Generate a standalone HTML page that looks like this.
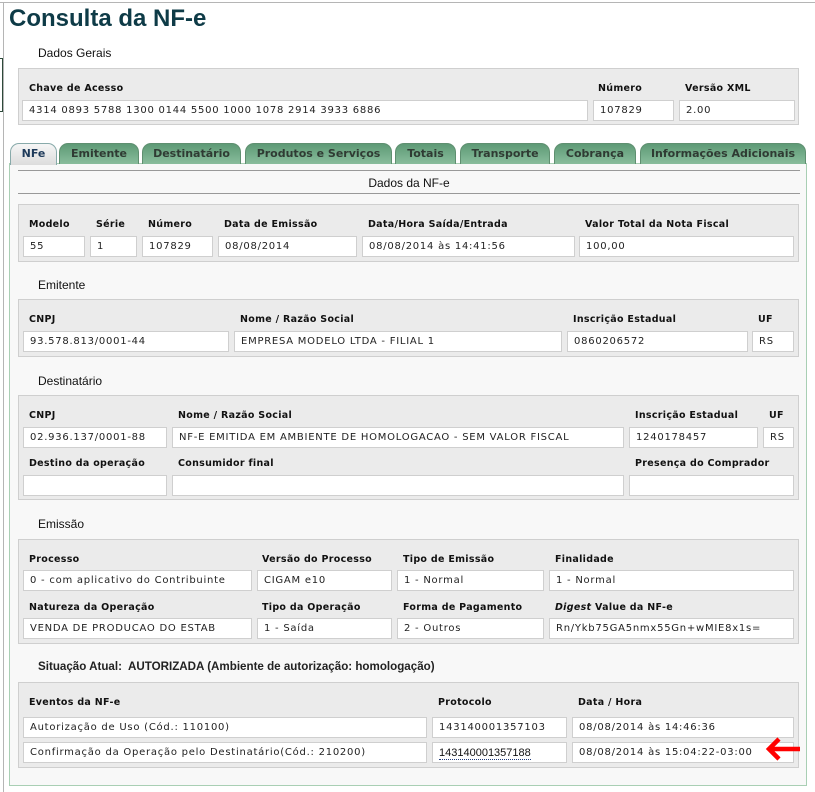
<!DOCTYPE html>
<html><head><meta charset="utf-8"><style>
*{margin:0;padding:0;box-sizing:border-box}
body{width:815px;height:792px;background:#fff;position:relative;overflow:hidden;font-family:"DejaVu Sans",Verdana,sans-serif}
div{position:absolute}
.b{background:#ebebeb;border:1px solid #cfcfcf}
.l{font-weight:bold;font-size:9.5px;color:#111;white-space:nowrap;letter-spacing:0.3px;margin-top:2px}
.i{background:#fff;border:1px solid #cfcfcf;height:21px;font-size:10px;color:#222;padding:4px 0 0 6px;white-space:nowrap;overflow:hidden;letter-spacing:0.75px}
.h{font-family:"Liberation Sans",Arial,sans-serif;font-size:12px;color:#111}
.t{top:143px;height:21px;border:1px solid #5f8f70;border-bottom:none;border-radius:9px 9px 0 0;background:linear-gradient(#5e9a76,#89bd9c);font-size:11px;color:#2f3b33;font-weight:bold;text-align:center;padding-top:3px;white-space:nowrap}
</style></head><body>
<div style="left:0;top:2px;width:815px;height:1px;background:#b5b5b5"></div>
<div style="left:3px;top:2px;width:1px;height:790px;background:#b5b5b5"></div>
<div style="left:0;top:58px;width:3px;height:54px;border:1px solid #2d4a3a;border-left:none"></div>
<div style="left:9px;top:5px;font-family:'Liberation Sans',Arial,sans-serif;font-weight:bold;font-size:24px;color:#0e3b47">Consulta da NF-e</div>
<div class="h" style="left:38px;top:46px">Dados Gerais</div>
<div class="b" style="left:18px;top:68px;width:781px;height:57px"></div>
<div class="l" style="left:29px;top:81px">Chave de Acesso</div>
<div class="l" style="left:598px;top:81px">Número</div>
<div class="l" style="left:685px;top:81px">Versão XML</div>
<div class="i" style="left:22px;top:100px;width:566px">4314 0893 5788 1300 0144 5500 1000 1078 2914 3933 6886</div>
<div class="i" style="left:593px;top:100px;width:81px">107829</div>
<div class="i" style="left:679px;top:100px;width:116px">2.00</div>

<div style="left:9px;top:163px;width:798px;height:623px;border:1px solid #a9cfb4;background:#f8f8f8"></div>
<div class="t" style="left:10px;width:47px;background:linear-gradient(#f6f6f6,#dcdcdc);border-color:#8aa;color:#1e3a5a;height:22px">NFe</div>
<div class="t" style="left:59px;width:80px">Emitente</div>
<div class="t" style="left:142px;width:99px">Destinatário</div>
<div class="t" style="left:245px;width:147px">Produtos e Serviços</div>
<div class="t" style="left:395px;width:61px">Totais</div>
<div class="t" style="left:460px;width:90px">Transporte</div>
<div class="t" style="left:554px;width:82px">Cobrança</div>
<div class="t" style="left:640px;width:166px">Informações Adicionais</div>

<div style="left:18px;top:170px;width:782px;height:1px;background:#999"></div>
<div style="left:18px;top:193px;width:782px;height:1px;background:#999"></div>
<div class="h" style="left:18px;top:176px;width:782px;text-align:center">Dados da NF-e</div>

<div class="b" style="left:18px;top:204px;width:781px;height:58px"></div>
<div class="l" style="left:29px;top:217px">Modelo</div>
<div class="l" style="left:96px;top:217px">Série</div>
<div class="l" style="left:148px;top:217px">Número</div>
<div class="l" style="left:224px;top:217px">Data de Emissão</div>
<div class="l" style="left:368px;top:217px">Data/Hora Saída/Entrada</div>
<div class="l" style="left:585px;top:217px">Valor Total da Nota Fiscal</div>
<div class="i" style="left:23px;top:236px;width:62px">55</div>
<div class="i" style="left:90px;top:236px;width:47px">1</div>
<div class="i" style="left:142px;top:236px;width:71px">107829</div>
<div class="i" style="left:218px;top:236px;width:139px">08/08/2014</div>
<div class="i" style="left:362px;top:236px;width:213px">08/08/2014 às 14:41:56</div>
<div class="i" style="left:579px;top:236px;width:215px">100,00</div>

<div class="h" style="left:38px;top:278px">Emitente</div>
<div class="b" style="left:18px;top:299px;width:781px;height:58px"></div>
<div class="l" style="left:29px;top:312px">CNPJ</div>
<div class="l" style="left:240px;top:312px">Nome / Razão Social</div>
<div class="l" style="left:573px;top:312px">Inscrição Estadual</div>
<div class="l" style="left:758px;top:312px">UF</div>
<div class="i" style="left:23px;top:331px;width:206px">93.578.813/0001-44</div>
<div class="i" style="left:234px;top:331px;width:328px">EMPRESA MODELO LTDA - FILIAL 1</div>
<div class="i" style="left:567px;top:331px;width:181px">0860206572</div>
<div class="i" style="left:752px;top:331px;width:42px">RS</div>

<div class="h" style="left:38px;top:374px">Destinatário</div>
<div class="b" style="left:18px;top:395px;width:781px;height:105px"></div>
<div class="l" style="left:29px;top:408px">CNPJ</div>
<div class="l" style="left:178px;top:408px">Nome / Razão Social</div>
<div class="l" style="left:635px;top:408px">Inscrição Estadual</div>
<div class="l" style="left:769px;top:408px">UF</div>
<div class="i" style="left:23px;top:427px;width:144px">02.936.137/0001-88</div>
<div class="i" style="left:172px;top:427px;width:452px">NF-E EMITIDA EM AMBIENTE DE HOMOLOGACAO - SEM VALOR FISCAL</div>
<div class="i" style="left:629px;top:427px;width:129px">1240178457</div>
<div class="i" style="left:763px;top:427px;width:31px">RS</div>
<div class="l" style="left:29px;top:456px">Destino da operação</div>
<div class="l" style="left:178px;top:456px">Consumidor final</div>
<div class="l" style="left:635px;top:456px">Presença do Comprador</div>
<div class="i" style="left:23px;top:475px;width:144px"></div>
<div class="i" style="left:172px;top:475px;width:452px"></div>
<div class="i" style="left:629px;top:475px;width:165px"></div>

<div class="h" style="left:38px;top:517px">Emissão</div>
<div class="b" style="left:18px;top:539px;width:781px;height:105px"></div>
<div class="l" style="left:29px;top:552px">Processo</div>
<div class="l" style="left:262px;top:552px">Versão do Processo</div>
<div class="l" style="left:403px;top:552px">Tipo de Emissão</div>
<div class="l" style="left:555px;top:552px">Finalidade</div>
<div class="i" style="left:23px;top:570px;width:229px">0 - com aplicativo do Contribuinte</div>
<div class="i" style="left:257px;top:570px;width:135px">CIGAM e10</div>
<div class="i" style="left:397px;top:570px;width:147px">1 - Normal</div>
<div class="i" style="left:549px;top:570px;width:245px">1 - Normal</div>
<div class="l" style="left:29px;top:600px">Natureza da Operação</div>
<div class="l" style="left:262px;top:600px">Tipo da Operação</div>
<div class="l" style="left:403px;top:600px">Forma de Pagamento</div>
<div class="l" style="left:555px;top:600px"><i>Digest</i> Value da NF-e</div>
<div class="i" style="left:23px;top:618px;width:229px">VENDA DE PRODUCAO DO ESTAB</div>
<div class="i" style="left:257px;top:618px;width:135px">1 - Saída</div>
<div class="i" style="left:397px;top:618px;width:147px">2 - Outros</div>
<div class="i" style="left:549px;top:618px;width:245px">Rn/Ykb75GA5nmx55Gn+wMIE8x1s=</div>

<div class="h" style="left:38px;top:660px;font-weight:bold;font-size:11.6px;color:#222">Situação Atual:&nbsp; AUTORIZADA (Ambiente de autorização: homologação)</div>
<div class="b" style="left:18px;top:682px;width:781px;height:86px"></div>
<div class="l" style="left:29px;top:695px">Eventos da NF-e</div>
<div class="l" style="left:438px;top:695px">Protocolo</div>
<div class="l" style="left:578px;top:695px">Data / Hora</div>
<div class="i" style="left:23px;top:717px;width:404px">Autorização de Uso (Cód.: 110100)</div>
<div class="i" style="left:432px;top:717px;width:135px">143140001357103</div>
<div class="i" style="left:572px;top:717px;width:222px">08/08/2014 às 14:46:36</div>
<div class="i" style="left:23px;top:742px;width:404px">Confirmação da Operação pelo Destinatário(Cód.: 210200)</div>
<div class="i" style="left:432px;top:742px;width:135px;letter-spacing:0"><span style="font-family:'Liberation Sans',Arial,sans-serif;font-size:11px;border-bottom:1px dotted #1e3a7a;color:#111">143140001357188</span></div>
<div class="i" style="left:572px;top:742px;width:222px">08/08/2014 às 15:04:22-03:00</div>
<svg style="position:absolute;left:764px;top:736px" width="38" height="26" viewBox="0 0 38 26"><path d="M5 13H36M15 3L5 13L15 23" stroke="#f00" stroke-width="4.5" fill="none"/></svg>
</body></html>
